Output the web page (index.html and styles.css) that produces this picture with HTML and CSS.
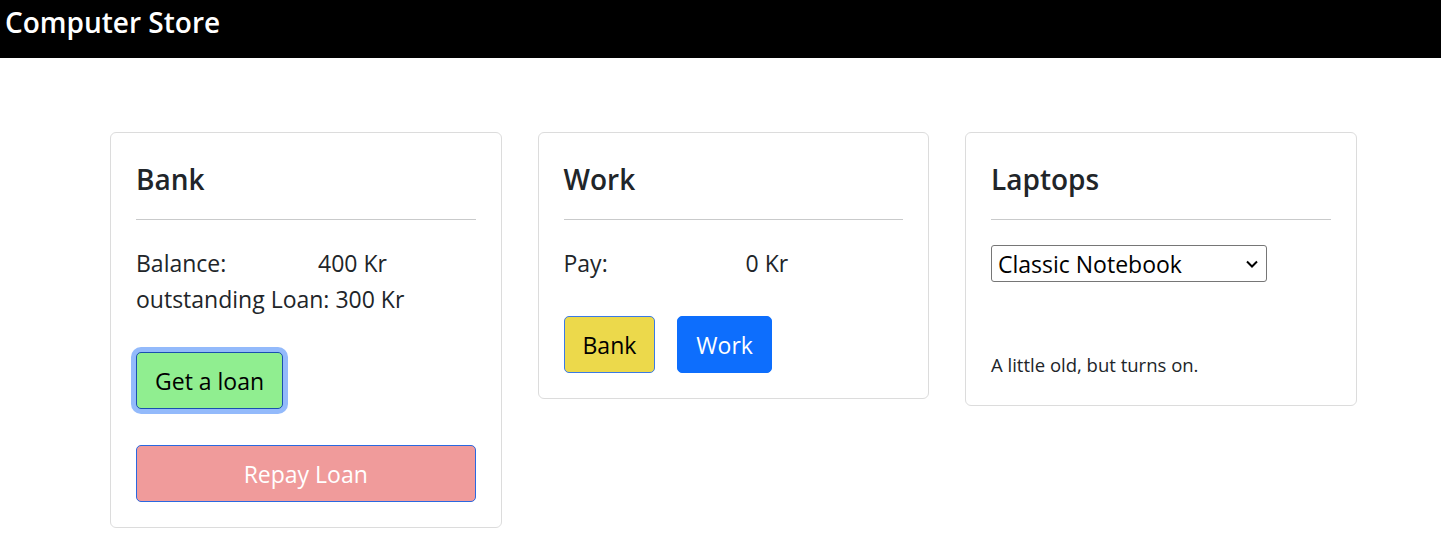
FILE: index.html
```html
<!DOCTYPE html>
<html lang="en">
<head>
<meta charset="utf-8">
<title>Computer Store</title>
<link rel="stylesheet" href="styles.css">
</head>
<body>
<header class="topbar">
  <h1 class="brand">Computer Store</h1>
</header>
<main class="cards">
  <section class="card">
    <h2 class="card-title">Bank</h2>
    <hr class="divider">
    <div class="info"><span class="label">Balance:</span>400 Kr</div>
    <div class="info"><span class="label">outstanding Loan:</span> 300 Kr</div>
    <div class="actions">
      <button class="btn btn-loan is-focused" type="button">Get a loan</button>
    </div>
    <button class="btn btn-repay btn-block" type="button">Repay Loan</button>
  </section>
  <section class="card">
    <h2 class="card-title">Work</h2>
    <hr class="divider">
    <div class="info"><span class="label">Pay:</span>0 Kr</div>
    <div class="actions">
      <button class="btn btn-bank" type="button">Bank</button>
      <button class="btn btn-work" type="button">Work</button>
    </div>
  </section>
  <section class="card">
    <h2 class="card-title">Laptops</h2>
    <hr class="divider">
    <div class="select-wrap">
      <select class="laptop-select">
        <option>Classic Notebook</option>
      </select>
      <svg class="select-arrow" width="12" height="8" viewBox="0 0 12 8" aria-hidden="true"><polyline points="1,1.5 6,6.5 11,1.5" fill="none" stroke="#000" stroke-width="2"/></svg>
    </div>
    <p class="description">A little old, but turns on.</p>
  </section>
</main>
</body>
</html>
```
FILE: styles.css
```css
* { box-sizing: border-box; }
body {
  margin: 0;
  font-family: "Open Sans", "Noto Sans", "Liberation Sans", sans-serif;
  color: #212529;
  background: #fff;
}
.topbar {
  background: #000;
  height: 58px;
  padding: 4px 5px 0;
}
.brand {
  margin: 0;
  color: #fff;
  font-size: 28px;
  font-weight: 600;
  line-height: 36px;
}
.cards {
  display: grid;
  grid-template-columns: repeat(3, 391.5px);
  column-gap: 36px;
  align-items: start;
  padding: 74px 0 0 110px;
}
.card {
  border: 1px solid #dcdcdc;
  border-radius: 6px;
  padding: 25px;
}
.card-title {
  margin: 2px 0 0;
  font-size: 28px;
  font-weight: 600;
  line-height: 38px;
}
.divider {
  margin: 21px 0 25px;
  border: 0;
  border-top: 1px solid #c9cacb;
}
.info {
  font-size: 23px;
  line-height: 36px;
}
.label {
  display: inline-block;
  min-width: 182px;
}
.actions {
  display: flex;
  gap: 22px;
  margin-top: 35px;
}
.btn {
  font-family: inherit;
  font-size: 23px;
  line-height: 36px;
  padding: 10px 18px 9px;
  border: 1px solid #0d6efd;
  border-radius: 5px;
  color: #000;
  cursor: pointer;
}
.btn-loan { background: #90ee90; border-color: #1a4fb0; }
.is-focused { box-shadow: 0 0 0 5px #93bafb; }
.btn-bank { background: #ecd94b; border-color: #3a7ae6; }
.btn-work { background: #0d6efd; color: #fff; }
.btn-repay {
  background: #f09b9b;
  color: #fff;
  border-color: #2a68e0;
}
.btn-block {
  display: block;
  width: 100%;
  margin-top: 36px;
}
.select-wrap {
  position: relative;
  width: 276px;
  margin-top: 23px;
}
.laptop-select {
  appearance: none;
  -webkit-appearance: none;
  width: 100%;
  height: 37px;
  font-family: inherit;
  font-size: 23px;
  color: #000;
  background: #fff;
  border: 1px solid #767676;
  border-radius: 3px;
  padding: 0 30px 0 6px;
}
.select-arrow {
  position: absolute;
  right: 9px;
  top: 15px;
  pointer-events: none;
}
.description {
  margin: 68px 0 0;
  font-size: 18.5px;
  line-height: 30px;
}
```
